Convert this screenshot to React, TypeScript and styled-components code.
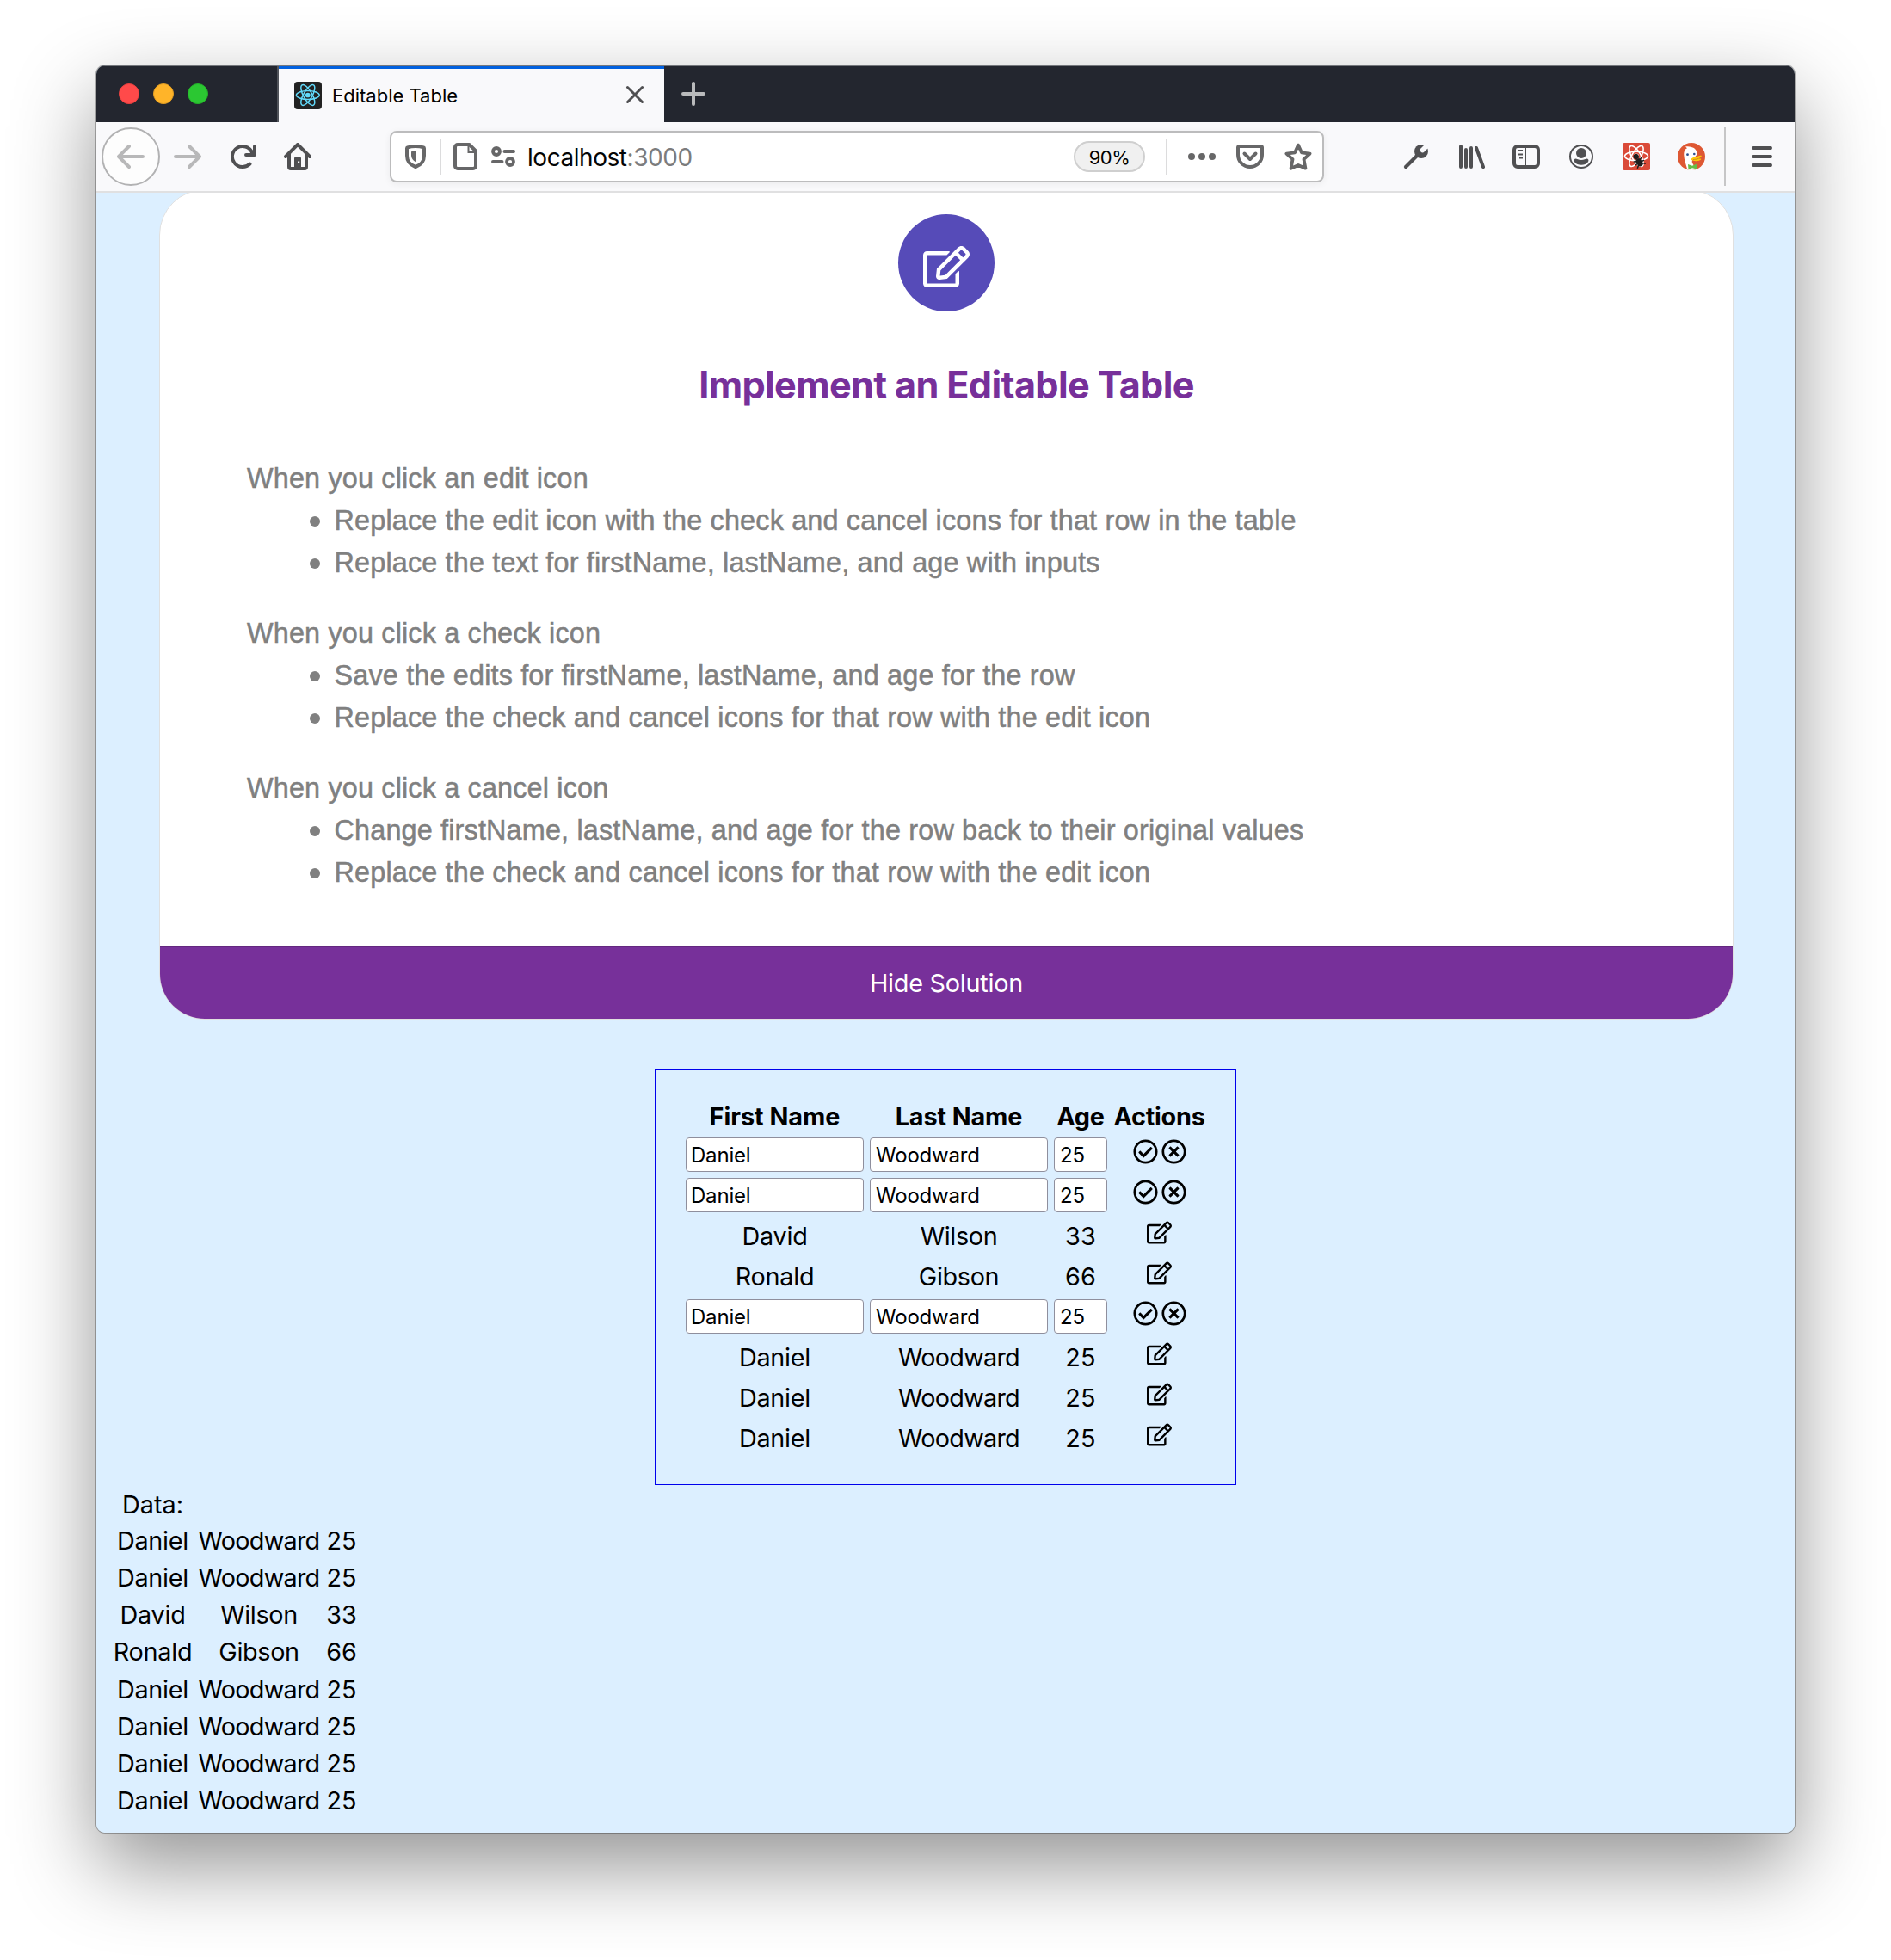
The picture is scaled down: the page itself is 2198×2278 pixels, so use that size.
import React from 'react';
import styled, { createGlobalStyle } from 'styled-components';
import { FaRegEdit, FaRegCheckCircle, FaRegTimesCircle } from 'react-icons/fa';

const GlobalStyle = createGlobalStyle`
  * { box-sizing: border-box; }
  body { margin: 0; background: #fff; }
`;

const Desktop = styled.div`
  width: 2198px;
  height: 2278px;
  padding: 76px 112px 148px;
  background: #fff;
  font-family: Inter, "Liberation Sans", sans-serif;
  color: #000;
  overflow: hidden;
`;

const BrowserWindow = styled.div`
  height: 2054px;
  display: flex;
  flex-direction: column;
  border-radius: 10px;
  overflow: hidden;
  background: #dcefff;
  box-shadow: 0 0 0 1px rgba(0, 0, 0, 0.28), 0 38px 96px rgba(0, 0, 0, 0.43);
`;

const TitleBar = styled.div`
  flex: none;
  height: 66px;
  display: flex;
  background: #23262f;
  border-top: 1px solid #74777c;
`;

const TrafficLights = styled.div`
  width: 212px;
  padding: 0 0 1px 26px;
  display: flex;
  align-items: center;
  gap: 16px;
  border-right: 2px solid #50535a;
`;

const Light = styled.span<{ $color: string; $edge: string }>`
  width: 24px;
  height: 24px;
  border-radius: 50%;
  background: ${p => p.$color};
  border: 1px solid ${p => p.$edge};
`;

const Tab = styled.div`
  width: 448px;
  display: flex;
  align-items: center;
  padding: 0 24px 0 18px;
  background: #f9f9fb;
  border-top: 3px solid #0060df;
`;

const TabTitle = styled.span`
  flex: 1;
  margin: 0 0 1px 12px;
  font-size: 22px;
  line-height: 30px;
`;

const NewTab = styled.div`
  display: flex;
  align-items: center;
  padding: 0 0 1px 20px;
`;

const ToolBar = styled.div`
  flex: none;
  height: 82px;
  display: flex;
  align-items: center;
  background: #f9f9fb;
  border-bottom: 2px solid #e0e0e1;
  color: #505052;
`;

const BackButton = styled.div`
  width: 68px;
  height: 68px;
  margin-left: 6px;
  display: flex;
  align-items: center;
  justify-content: center;
  border: 2px solid #b2b2b3;
  border-radius: 50%;
  background: #fdfdfd;
  color: #b8b8b9;
`;

const Glyph = styled.svg<{ $left?: number; $tone?: string }>`
  flex: none;
  display: block;
  width: 32px;
  height: 32px;
  margin-left: ${p => p.$left ?? 0}px;
  color: ${p => p.$tone ?? 'inherit'};
`;

const UrlBar = styled.div`
  width: 1086px;
  height: 60px;
  margin-left: 91px;
  padding: 0 12px;
  display: flex;
  align-items: center;
  background: #fff;
  border: 2px solid #bcbcbd;
  border-radius: 8px;
  box-shadow: 0 2px 8px rgba(0, 0, 0, 0.06);
  color: #676768;
`;

const Separator = styled.span<{ $height: number; $left: number; $color: string }>`
  flex: none;
  width: 2px;
  height: ${p => p.$height}px;
  margin-left: ${p => p.$left}px;
  background: ${p => p.$color};
`;

const Address = styled.span`
  flex: 1;
  margin-left: 12px;
  padding-top: 2px;
  font-size: 28px;
  letter-spacing: -0.45px;
  line-height: 36px;
  color: #7c7c7d;
`;

const Host = styled.span`
  color: #050505;
`;

const Zoom = styled.span`
  width: 83px;
  height: 36px;
  padding-top: 2px;
  display: flex;
  align-items: center;
  justify-content: center;
  border: 2px solid #cfcfcf;
  border-radius: 18px;
  background: #f0f0f0;
  color: #000;
  font-size: 22px;
  letter-spacing: -0.5px;
`;

const Page = styled.main`
  flex: 1;
  overflow: hidden;
  background: #dcefff;
`;

const Card = styled.section`
  width: 1830px;
  height: 965px;
  margin: -4px 0 0 73px;
  display: flex;
  flex-direction: column;
  align-items: center;
  border: 1px solid #e0e0e0;
  border-radius: 53px;
  overflow: hidden;
  background: #fff;
`;

const Badge = styled.div`
  flex: none;
  width: 112px;
  height: 113px;
  margin-top: 28px;
  padding-top: 8px;
  display: flex;
  align-items: center;
  justify-content: center;
  border-radius: 50%;
  background: #564bb8;
  color: #fff;
  font-size: 54px;
`;

const Title = styled.h1`
  margin: 59px 0;
  font-size: 43.2px;
  font-weight: 700;
  line-height: 52px;
  letter-spacing: -0.64px;
  color: #77309a;
`;

const Instructions = styled.div`
  align-self: stretch;
  flex: 1;
  display: flex;
  flex-direction: column;
  gap: 33px;
  padding-left: 101px;
  font-family: "Liberation Sans", Arial, sans-serif;
  font-size: 32.4px;
  line-height: 49px;
  letter-spacing: 0.16px;
  color: #808080;
  -webkit-text-stroke: 0.5px #808080;
`;

const Steps = styled.ul`
  margin: 0;
  padding: 0 0 0 73px;
  list-style: none;
`;

const Step = styled.li`
  display: flex;
  align-items: center;
  gap: 16.5px;
  &::before {
    content: '';
    width: 12px;
    height: 12px;
    border-radius: 50%;
    background: currentColor;
  }
`;

const SolutionToggle = styled.button`
  flex: none;
  align-self: stretch;
  height: 84px;
  margin: 0;
  padding: 0;
  border: 0;
  border-top: 1px solid #63287f;
  background: #77309a;
  color: #fff;
  font-family: inherit;
  font-size: 28.8px;
  letter-spacing: -0.25px;
`;

const TableFrame = styled.section`
  width: 676px;
  height: 483px;
  margin: 58px 0 0 649px;
  padding: 36px 35px 0;
  display: flex;
  flex-direction: column;
  gap: 7px;
  border: 1px solid #0000ec;
  font-size: 28.8px;
`;

const TableRow = styled.div<{ $head?: boolean }>`
  height: ${p => (p.$head ? 35 : 40)}px;
  padding-bottom: ${p => (p.$head ? 2 : 0)}px;
  display: grid;
  grid-template-columns: 207px 207px 62px 107px;
  column-gap: 7px;
  font-weight: ${p => (p.$head ? 700 : 400)};
`;

const Cell = styled.div<{ $tracking?: number }>`
  display: flex;
  align-items: center;
  justify-content: center;
  white-space: nowrap;
  letter-spacing: ${p => p.$tracking ?? -0.25}px;
`;

const Field = styled.input<{ $inset?: number }>`
  width: 100%;
  height: 40px;
  padding: 0 4px 0 ${p => p.$inset ?? 6}px;
  border: 1px solid #8f8f9d;
  border-radius: 4px;
  background: #fff;
  color: #000;
  font-family: inherit;
  font-size: 24px;
  letter-spacing: -0.2px;
`;

const Actions = styled.div<{ $lift: number }>`
  display: flex;
  align-items: center;
  justify-content: center;
  gap: 4px;
  padding-bottom: ${p => p.$lift}px;
  font-size: 29px;
`;

const DataLabel = styled.div`
  height: 41px;
  margin-top: 2px;
  padding-left: 30px;
  font-size: 28.8px;
  line-height: 41px;
`;

const DataRow = styled.div`
  height: 43.15px;
  padding-left: 16px;
  display: grid;
  grid-template-columns: 99px 148px 44px;
  font-size: 28.8px;
`;

interface Person {
  first: string;
  last: string;
  age: number;
  editing?: boolean;
}

const people: Person[] = [
  { first: 'Daniel', last: 'Woodward', age: 25, editing: true },
  { first: 'Daniel', last: 'Woodward', age: 25, editing: true },
  { first: 'David', last: 'Wilson', age: 33 },
  { first: 'Ronald', last: 'Gibson', age: 66 },
  { first: 'Daniel', last: 'Woodward', age: 25, editing: true },
  { first: 'Daniel', last: 'Woodward', age: 25 },
  { first: 'Daniel', last: 'Woodward', age: 25 },
  { first: 'Daniel', last: 'Woodward', age: 25 },
];

const instructions = [
  {
    lead: 'When you click an edit icon',
    steps: [
      'Replace the edit icon with the check and cancel icons for that row in the table',
      'Replace the text for firstName, lastName, and age with inputs',
    ],
  },
  {
    lead: 'When you click a check icon',
    steps: [
      'Save the edits for firstName, lastName, and age for the row',
      'Replace the check and cancel icons for that row with the edit icon',
    ],
  },
  {
    lead: 'When you click a cancel icon',
    steps: [
      'Change firstName, lastName, and age for the row back to their original values',
      'Replace the check and cancel icons for that row with the edit icon',
    ],
  },
];

const trackingFor = (name: string) => (name.length > 6 ? -0.75 : -0.35);

const ARROW =
  'M15 7H3.414l4.293-4.293a1 1 0 0 0-1.414-1.414l-6 6a1 1 0 0 0 0 1.414l6 6a1 1 0 0 0 1.414-1.414L3.414 9H15a1 1 0 0 0 0-2z';

function Atom({ cx, cy, rx, ry, color, width }: { cx: number; cy: number; rx: number; ry: number; color: string; width: number }) {
  return (
    <g fill="none" stroke={color} strokeWidth={width}>
      {[0, 60, 120].map(a => (
        <ellipse key={a} cx={cx} cy={cy} rx={rx} ry={ry} transform={`rotate(${a} ${cx} ${cy})`} />
      ))}
      <circle cx={cx} cy={cy} r={width * 1.9} fill={color} stroke="none" />
    </g>
  );
}

function TabStrip() {
  return (
    <TitleBar>
      <TrafficLights>
        <Light $color="#ff4a4a" $edge="#e8403f" />
        <Light $color="#ffb429" $edge="#e39e22" />
        <Light $color="#2bc732" $edge="#24b02a" />
      </TrafficLights>
      <Tab>
        <Glyph viewBox="0 0 32 32">
          <rect width="32" height="32" rx="4" fill="#222222" />
          <Atom cx={15.8} cy={15.5} rx={13.4} ry={5} color="#61dafb" width={1.5} />
        </Glyph>
        <TabTitle>Editable Table</TabTitle>
        <Glyph viewBox="0 0 32 32" fill="none" stroke="#505052" strokeWidth="3" strokeLinecap="round">
          <path d="M13.500 6.500l17 17M30.500 6.500l-17 17" />
        </Glyph>
      </Tab>
      <NewTab>
        <Glyph viewBox="0 0 32 32" stroke="#b9babc" strokeWidth="4" strokeLinecap="round">
          <path d="M2 16h24M14 4v24" />
        </Glyph>
      </NewTab>
    </TitleBar>
  );
}

function AddressBar() {
  return (
    <UrlBar>
      <Glyph viewBox="0 0 32 32" fill="none">
        <path
          d="M16 4c3.600 0 7 .6 9.300 1.400.5.200.7.500.7 1V15c0 6.500-4.500 11-10 13C10.500 26 6 21.500 6 15V6.400c0-.5.200-.8.7-1C9 4.600 12.400 4 16 4z"
          stroke="currentColor"
          strokeWidth="4"
          strokeLinejoin="round"
        />
        <path d="M16 9.500v12.800c-3-1.700-5-4.300-5-7.500V10.200c1.500-.4 3.200-.7 5-.7z" fill="currentColor" />
      </Glyph>
      <Separator $height={42} $left={12} $color="#dcdcdd" />
      <Glyph viewBox="0 0 32 32" $left={12} fill="none" stroke="currentColor">
        <path d="M7 2h13.500L28 9.500V27a3 3 0 0 1-3 3H7a3 3 0 0 1-3-3V5a3 3 0 0 1 3-3z" strokeWidth="4" strokeLinejoin="round" />
        <path d="M19.500 3v8h8" strokeWidth="2" />
      </Glyph>
      <Glyph viewBox="0 0 32 32" $left={12} fill="none" stroke="currentColor" strokeWidth="4" strokeLinecap="round">
        <circle cx="8" cy="10" r="4" strokeWidth="3.800" />
        <path d="M17.500 10H28M4 22h10.500" />
        <circle cx="24" cy="22" r="4" strokeWidth="3.800" />
      </Glyph>
      <Address>
        <Host>localhost</Host>:3000
      </Address>
      <Zoom>90%</Zoom>
      <Separator $height={42} $left={24} $color="#dcdcdd" />
      <Glyph viewBox="0 0 32 32" $left={24} fill="currentColor">
        <circle cx="4" cy="16" r="4" />
        <circle cx="16" cy="16" r="4" />
        <circle cx="28" cy="16" r="4" />
      </Glyph>
      <Glyph viewBox="0 0 32 32" $left={24} fill="none" stroke="currentColor" strokeWidth="4" strokeLinecap="round" strokeLinejoin="round">
        <path d="M3.500 4h25a1.500 1.500 0 0 1 1.500 1.500V14a14 14 0 0 1-28 0V5.500A1.500 1.500 0 0 1 3.500 4z" />
        <path d="M9.500 12.500l6.500 6.500 6.500-6.500" />
      </Glyph>
      <Glyph viewBox="0 0 32 32" $left={24} fill="none" stroke="currentColor" strokeWidth="3.800" strokeLinejoin="round">
        <path d="M16 2.600l3.900 8.700 9.700 1.300-7.100 6.600 1.900 10.500-8.400-3.700-8.400 3.700 1.900-10.500-7.100-6.600 9.700-1.300z" />
      </Glyph>
    </UrlBar>
  );
}

function DuckLogo() {
  return (
    <Glyph viewBox="0 0 32 32" $left={32}>
      <defs>
        <clipPath id="duck-disc">
          <circle cx="16" cy="16" r="16" />
        </clipPath>
      </defs>
      <circle cx="16" cy="16" r="16" fill="#de5833" />
      <g clipPath="url(#duck-disc)">
        <path d="M11.500 32C10 26 7.500 20 7.300 14.500 7 10 8.500 7 11 6.200L9 4.600c2-.6 5-.4 7 .4 4.500 1 6.500 4 6.500 8.500l-4.500 5.500c-2 2-1.500 4 0 6l3 7z" fill="#fff" />
        <path d="M15.500 19c2-2.500 5.500-2.200 8-3.200 2-.8 4-1.300 4.300-.6.300 1.100-2 2.500-4.500 3.300 1.500.2 3.500-.4 4 .3.300 1-3 2.700-6 2.400-2.800-.2-5.500-.6-5.800-2.200z" fill="#fdc80a" />
        <path d="M18 19.500c2.500-.2 4.500-.4 6-1" stroke="#c98a1c" strokeWidth=".9" fill="none" />
        <circle cx="11.500" cy="13.700" r="1.400" fill="#2d4f8e" />
        <circle cx="19.300" cy="13" r="1.300" fill="#2d4f8e" />
        <path d="M12 25l5 1.700 5.300-2.200v6L17 29.300 12.500 31z" fill="#67bd47" />
      </g>
    </Glyph>
  );
}

function NavigationBar() {
  return (
    <ToolBar>
      <BackButton>
        <Glyph viewBox="0 0 16 16" fill="currentColor">
          <path d={ARROW} />
        </Glyph>
      </BackButton>
      <Glyph viewBox="0 0 16 16" $left={16} $tone="#b8b8b9" fill="currentColor">
        <path d={ARROW} transform="matrix(-1 0 0 1 16 0)" />
      </Glyph>
      <Glyph viewBox="0 0 16 16" $left={32} fill="currentColor">
        <path d="M15 1a1 1 0 0 0-1 1v2.418A6.995 6.995 0 1 0 8 15a6.954 6.954 0 0 0 4.950-2.050 1 1 0 0 0-1.414-1.414A5.019 5.019 0 1 1 12.549 6H10a1 1 0 0 0 0 2h5a1 1 0 0 0 1-1V2a1 1 0 0 0-1-1z" />
      </Glyph>
      <Glyph viewBox="0 0 16 16" $left={32} fill="currentColor">
        <path
          fillRule="evenodd"
          d="M15.707 7.293l-7-7a1 1 0 0 0-1.414 0l-7 7a1 1 0 0 0 1.414 1.414L2 8.414V14a2 2 0 0 0 2 2h8a2 2 0 0 0 2-2V8.414l.293.293a1 1 0 0 0 1.414-1.414zM12 14h-2V9a1 1 0 0 0-1-1H7a1 1 0 0 0-1 1v5H4V6.414l4-4 4 4zM8 10.800h1.100v1.200H8z"
        />
      </Glyph>
      <AddressBar />
      <Glyph viewBox="0 0 32 32" $left={91}>
        <path d="M4 28l13-13" stroke="currentColor" strokeWidth="4.200" strokeLinecap="round" />
        <circle cx="22" cy="10" r="8" fill="currentColor" />
        <path d="M31 1l-7.500 7.500" stroke="#f9f9fb" strokeWidth="5.600" strokeLinecap="round" />
      </Glyph>
      <Glyph viewBox="0 0 32 32" $left={32} stroke="currentColor" strokeWidth="4" strokeLinecap="round">
        <path d="M4 4v24M10 8v20M16 6v22M22 6l8 22" />
      </Glyph>
      <Glyph viewBox="0 0 32 32" $left={32} fill="none" stroke="currentColor">
        <rect x="2" y="4" width="28" height="24" rx="4" strokeWidth="4" />
        <path d="M15 5v22M6 9h6M6 13.500h6M8 17.500h4" strokeWidth="2" />
      </Glyph>
      <Glyph viewBox="0 0 32 32" $left={32} fill="currentColor">
        <circle cx="16" cy="16" r="13" fill="none" stroke="currentColor" strokeWidth="2" />
        <circle cx="16" cy="12" r="6" />
        <path d="M8.600 18.700c1.800-.7 3.600 1.300 7.400 1.300s5.600-2 7.400-1.300c1.500.700 1.200 2.600.3 3.800-1.700 2.200-4.400 3.300-7.700 3.300s-6-1.100-7.700-3.300c-.900-1.200-1.200-3.100.3-3.800z" />
      </Glyph>
      <Glyph viewBox="0 0 32 32" $left={32}>
        <rect width="32" height="32" rx="2" fill="#da4a38" />
        <Atom cx={16} cy={15.5} rx={13.5} ry={5.2} color="#fff" width={1.6} />
        <g transform="rotate(-30 18 20)">
          <circle cx="18" cy="15.500" r="3.200" fill="#1d1d1d" />
          <rect x="14.800" y="18.500" width="6.400" height="9.500" rx="3" fill="#1d1d1d" />
          <path d="M12.500 19l3 1.500M23.500 19l-3 1.500M12 23.500h12M12.500 28l3-2.500M23.500 28l-3-2.500" stroke="#1d1d1d" strokeWidth="1.500" />
        </g>
      </Glyph>
      <DuckLogo />
      <Separator $height={68} $left={22} $color="#c6c6c7" />
      <Glyph viewBox="0 0 32 32" $left={26} stroke="currentColor" strokeWidth="4" strokeLinecap="round">
        <path d="M6 6h20M6 16h20M6 26h20" />
      </Glyph>
    </ToolBar>
  );
}

function PersonRow({ person }: { person: Person }) {
  if (person.editing) {
    return (
      <TableRow>
        <Field $inset={5} defaultValue={person.first} />
        <Field defaultValue={person.last} />
        <Field defaultValue={person.age} />
        <Actions $lift={8}>
          <FaRegCheckCircle />
          <FaRegTimesCircle />
        </Actions>
      </TableRow>
    );
  }
  return (
    <TableRow>
      <Cell>{person.first}</Cell>
      <Cell $tracking={trackingFor(person.last)}>{person.last}</Cell>
      <Cell $tracking={0.2}>{person.age}</Cell>
      <Actions $lift={7}>
        <FaRegEdit />
      </Actions>
    </TableRow>
  );
}

export default function App() {
  return (
    <Desktop>
      <GlobalStyle />
      <BrowserWindow>
        <TabStrip />
        <NavigationBar />
        <Page>
          <Card>
            <Badge>
              <FaRegEdit />
            </Badge>
            <Title>Implement an Editable Table</Title>
            <Instructions>
              {instructions.map(block => (
                <div key={block.lead}>
                  {block.lead}
                  <Steps>
                    {block.steps.map(step => (
                      <Step key={step}>{step}</Step>
                    ))}
                  </Steps>
                </div>
              ))}
            </Instructions>
            <SolutionToggle>Hide Solution</SolutionToggle>
          </Card>
          <TableFrame>
            <TableRow $head>
              <Cell $tracking={0}>First Name</Cell>
              <Cell $tracking={-0.1}>Last Name</Cell>
              <Cell>Age</Cell>
              <Cell>Actions</Cell>
            </TableRow>
            {people.map((person, i) => (
              <PersonRow key={i} person={person} />
            ))}
          </TableFrame>
          <DataLabel>Data:</DataLabel>
          {people.map((person, i) => (
            <DataRow key={i}>
              <Cell>{person.first}</Cell>
              <Cell $tracking={trackingFor(person.last)}>{person.last}</Cell>
              <Cell $tracking={0}>{person.age}</Cell>
            </DataRow>
          ))}
        </Page>
      </BrowserWindow>
    </Desktop>
  );
}
